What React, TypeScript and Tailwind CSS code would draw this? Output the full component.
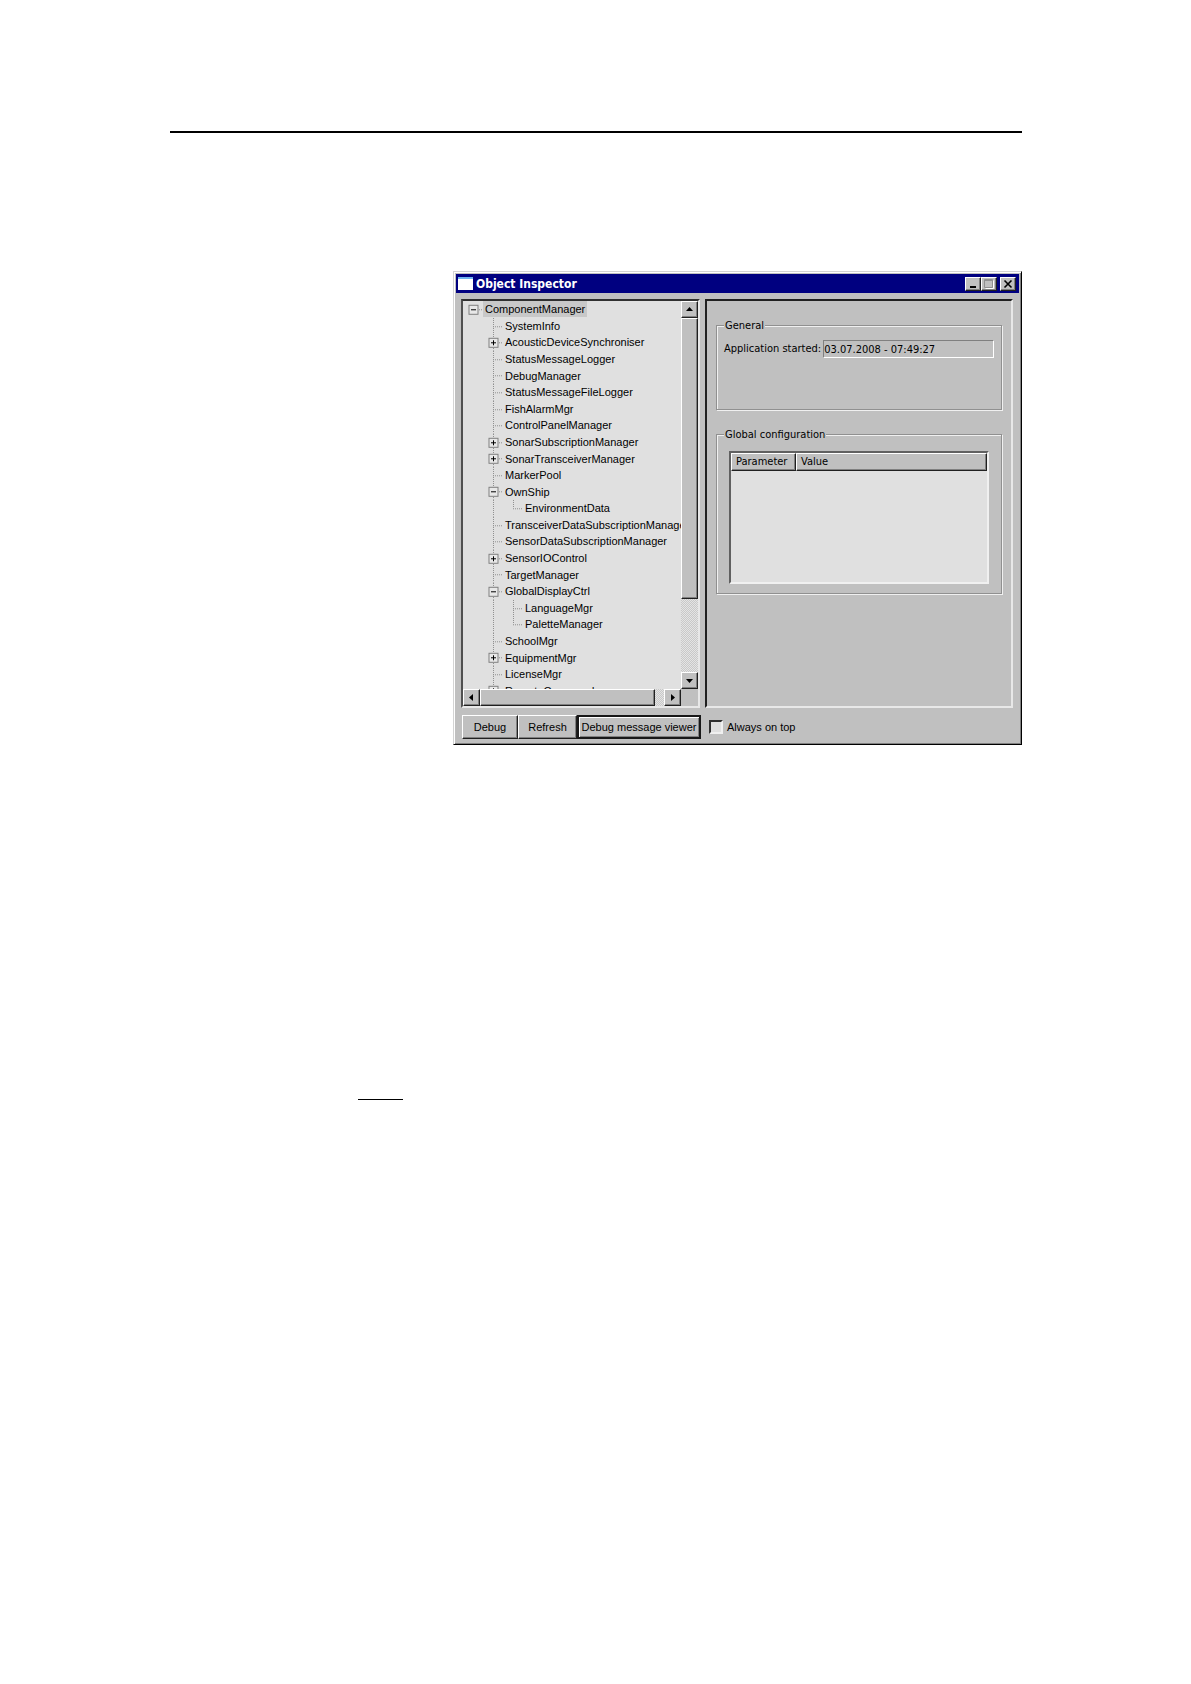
import React, { useState } from 'react';

interface TreeItem {
  label: string;
  level: number;
  state?: 'open' | 'closed';
  last?: boolean;
}

const treeItems: TreeItem[] = [
  { label: 'ComponentManager', level: 0, state: 'open' },
  { label: 'SystemInfo', level: 1 },
  { label: 'AcousticDeviceSynchroniser', level: 1, state: 'closed' },
  { label: 'StatusMessageLogger', level: 1 },
  { label: 'DebugManager', level: 1 },
  { label: 'StatusMessageFileLogger', level: 1 },
  { label: 'FishAlarmMgr', level: 1 },
  { label: 'ControlPanelManager', level: 1 },
  { label: 'SonarSubscriptionManager', level: 1, state: 'closed' },
  { label: 'SonarTransceiverManager', level: 1, state: 'closed' },
  { label: 'MarkerPool', level: 1 },
  { label: 'OwnShip', level: 1, state: 'open' },
  { label: 'EnvironmentData', level: 2, last: true },
  { label: 'TransceiverDataSubscriptionManager', level: 1 },
  { label: 'SensorDataSubscriptionManager', level: 1 },
  { label: 'SensorIOControl', level: 1, state: 'closed' },
  { label: 'TargetManager', level: 1 },
  { label: 'GlobalDisplayCtrl', level: 1, state: 'open' },
  { label: 'LanguageMgr', level: 2 },
  { label: 'PaletteManager', level: 2, last: true },
  { label: 'SchoolMgr', level: 1 },
  { label: 'EquipmentMgr', level: 1, state: 'closed' },
  { label: 'LicenseMgr', level: 1 },
  { label: 'RemoteCommand', level: 1, state: 'closed' },
];

const raised =
  'bg-[#c0c0c0] border border-t-white border-l-white border-r-[#202020] border-b-[#202020] shadow-[inset_-1px_-1px_0_#808080]';

const track = 'bg-[repeating-conic-gradient(#c8c8c8_0_25%,#e4e4e4_0_50%)] bg-size-[2px_2px]';

const Arrow: React.FC<{ points: string }> = ({ points }) => (
  <svg width="9" height="9" viewBox="0 0 9 9" aria-hidden="true">
    <polygon points={points} fill="#000" />
  </svg>
);

const ScrollButton: React.FC<{ label: string; points: string }> = ({ label, points }) => (
  <button
    type="button"
    aria-label={label}
    className={`flex size-[17px] shrink-0 items-center justify-center ${raised}`}
  >
    <Arrow points={points} />
  </button>
);

// One 20px column of the tree: guide lines and, on a branch, the expand box
const Guide: React.FC<{ item: TreeItem; column: number }> = ({ item, column }) => {
  const own = column === item.level;
  const dots = { stroke: '#909090', strokeDasharray: '1 1' };
  return (
    <svg className="h-full w-5 shrink-0" aria-hidden="true">
      {column > 0 && (
        <line x1="10.5" x2="10.5" y1="0" y2={own && item.last ? '50%' : '100%'} {...dots} />
      )}
      {own && (
        <svg y="50%" className="overflow-visible">
          <line x1="10" x2="19" y1="0.5" y2="0.5" {...dots} />
          {item.state && (
            <>
              <rect x="6" y="-4" width="9" height="9" fill="#e8e8e8" stroke="#808080" />
              <path d="M8 0.5h5" stroke="#000" />
              {item.state === 'closed' && <path d="M10.5 -2v5" stroke="#000" />}
            </>
          )}
        </svg>
      )}
    </svg>
  );
};

const TreeRow: React.FC<{ item: TreeItem; selected: boolean; onSelect: () => void }> = ({
  item,
  selected,
  onSelect,
}) => (
  <li
    role="treeitem"
    aria-level={item.level + 1}
    aria-selected={selected}
    aria-expanded={item.state ? item.state === 'open' : undefined}
    onClick={onSelect}
    className={`flex min-h-0 items-center ${item.level > 0 ? 'pl-5' : ''}`}
  >
    {Array.from({ length: item.level + 1 }, (_, i) => i)
      .filter((column) => column > 0 || item.level === 0)
      .map((column) => (
        <Guide key={column} item={item} column={column} />
      ))}
    <span className={`px-0.5 leading-4 whitespace-nowrap ${selected ? 'bg-[#c8c8c8]' : ''}`}>{item.label}</span>
  </li>
);

const ObjectTree: React.FC = () => {
  const [selected, setSelected] = useState('ComponentManager');

  return (
    <div className="grid w-[239px] shrink-0 grid-cols-[1fr_17px] grid-rows-[1fr_17px] border-2 border-t-[#303030] border-l-[#505050] border-r-[#e8e8e8] border-b-[#e8e8e8] bg-[#e0e0e0]">
      <div className="min-w-0 overflow-hidden">
        <ul role="tree" aria-label="Objects" className="grid h-[398px] auto-rows-fr">
          {treeItems.map((item) => (
            <TreeRow
              key={item.label}
              item={item}
              selected={selected === item.label}
              onSelect={() => setSelected(item.label)}
            />
          ))}
        </ul>
      </div>
      <div className={`flex flex-col ${track}`}>
        <ScrollButton label="Scroll up" points="1,6 8,6 4.5,2" />
        <div className={`h-[281px] ${raised}`} />
        <div className="flex-1" />
        <ScrollButton label="Scroll down" points="1,3 8,3 4.5,7" />
      </div>
      <div className={`flex ${track}`}>
        <ScrollButton label="Scroll left" points="6,1 6,8 2,4.5" />
        <div className={`w-[175px] ${raised}`} />
        <div className="flex-1" />
        <ScrollButton label="Scroll right" points="3,1 3,8 7,4.5" />
      </div>
      <div className="bg-[#c0c0c0]" />
    </div>
  );
};

const group = 'min-w-0 border border-[#909090] px-[7px] shadow-[1px_1px_0_#f0f0f0,inset_1px_1px_0_#f0f0f0]';

const Details: React.FC = () => (
  <div className="flex min-w-0 flex-1 flex-col border-2 border-t-[#202020] border-l-[#202020] border-r-[#e8e8e8] border-b-[#e8e8e8] px-[9px] pt-6 font-['DejaVu_Sans_Condensed','DejaVu_Sans',sans-serif]">
    <section aria-labelledby="general" className={`h-[85px] ${group}`}>
      <h2 id="general" className="-mt-2 w-fit bg-[#c0c0c0] px-px leading-4">
        General
      </h2>
      <div className="mt-1.5 flex items-center gap-0.5">
        <label htmlFor="started" className="whitespace-nowrap">
          Application started:
        </label>
        <input
          id="started"
          readOnly
          value="03.07.2008 - 07:49:27"
          className="h-[18px] min-w-0 flex-1 border border-t-[#808080] border-l-[#808080] border-r-white border-b-white outline-none"
        />
      </div>
    </section>
    <section aria-labelledby="global" className={`mt-6 h-40 ${group}`}>
      <h2 id="global" className="-mt-2 w-fit bg-[#c0c0c0] px-px leading-4">
        Global configuration
      </h2>
      <div className="mx-[5px] mt-2 h-[133px] border-2 border-t-[#606060] border-l-[#606060] border-r-[#f0f0f0] border-b-[#f0f0f0] bg-[#e0e0e0]">
        <table className="w-full table-fixed border-collapse text-left">
          <thead>
            <tr className="h-[18px] bg-[#c0c0c0]">
              <th className="w-[65px] p-0 font-normal">
                <div className={`h-[18px] pl-1 leading-4 ${raised}`}>Parameter</div>
              </th>
              <th className="p-0 font-normal">
                <div className={`h-[18px] pl-1 leading-4 ${raised}`}>Value</div>
              </th>
            </tr>
          </thead>
          <tbody />
        </table>
      </div>
    </section>
  </div>
);

const captionButton = `flex h-3.5 w-4 items-center justify-center ${raised}`;

const ObjectInspector: React.FC = () => (
  <section
    aria-label="Object Inspector"
    className="border border-t-[#d4d4d4] border-l-[#d4d4d4] border-r-black border-b-black bg-[#c0c0c0] px-0.5 pt-0.5 font-['Liberation_Sans',sans-serif] text-[11px] text-black shadow-[inset_1px_1px_0_#fff,inset_-1px_-1px_0_#808080]"
  >
    <header className="flex h-[19px] items-center bg-[#000080] pr-[3px] pl-0.5">
      <svg width="15" height="13" viewBox="0 0 15 13" aria-hidden="true">
        <rect width="15" height="13" fill="#fff" />
        <rect width="15" height="2" fill="#6fb4f0" />
      </svg>
      <h1 className="ml-[3px] flex-1 font-['DejaVu_Sans_Condensed','DejaVu_Sans',sans-serif] text-xs font-bold text-white">
        Object Inspector
      </h1>
      <button type="button" aria-label="Minimize" className={captionButton}>
        <svg width="10" height="10" viewBox="0 0 10 10">
          <path d="M2 8h6" stroke="#000" strokeWidth="2" />
        </svg>
      </button>
      <button type="button" aria-label="Maximize" disabled className={captionButton}>
        <svg width="10" height="10" viewBox="0 0 10 10">
          <path d="M1.5 9.5h8v-8" fill="none" stroke="#fff" />
          <path d="M0.5 0.5h8v8h-8zM0.5 1.5h8" fill="none" stroke="#909090" />
        </svg>
      </button>
      <button type="button" aria-label="Close" className={`ml-[3px] ${captionButton}`}>
        <svg width="10" height="10" viewBox="0 0 10 10">
          <path d="M1.5 1.5l7 7M8.5 1.5l-7 7" stroke="#000" strokeWidth="1.6" />
        </svg>
      </button>
    </header>
    <div className="pt-1.5 pr-1.5 pb-[5px] pl-[5px]">
      <div className="flex h-[409px] gap-[5px]">
        <ObjectTree />
        <Details />
      </div>
      <footer className="mt-[7px] flex h-6 items-center pl-px">
        <button type="button" className={`h-6 w-14 ${raised}`}>
          Debug
        </button>
        <button type="button" className={`h-6 w-[59px] ${raised}`}>
          Refresh
        </button>
        <button
          type="button"
          className="h-6 w-[124px] border-2 border-[#181818] whitespace-nowrap shadow-[inset_1px_1px_0_#fff,inset_-1px_-1px_0_#808080]"
        >
          Debug message viewer
        </button>
        <label className="ml-2 flex items-center gap-1">
          <input
            type="checkbox"
            className="size-3.5 appearance-none border-2 border-t-[#303030] border-l-[#303030] border-r-[#f0f0f0] border-b-[#f0f0f0] bg-[#e0e0e0] checked:bg-[#303030]"
          />
          Always on top
        </label>
      </footer>
    </div>
  </section>
);

const App: React.FC = () => {
  return (
    <main className="min-h-screen bg-white pt-[131px] pr-[169px] pl-[170px]">
      <hr className="border-t-2 border-black" />
      <div className="mt-[138px] ml-[283px]">
        <ObjectInspector />
      </div>
      <hr className="mt-[354px] ml-[188px] w-[45px] border-t border-black" />
    </main>
  );
};

export default App;
